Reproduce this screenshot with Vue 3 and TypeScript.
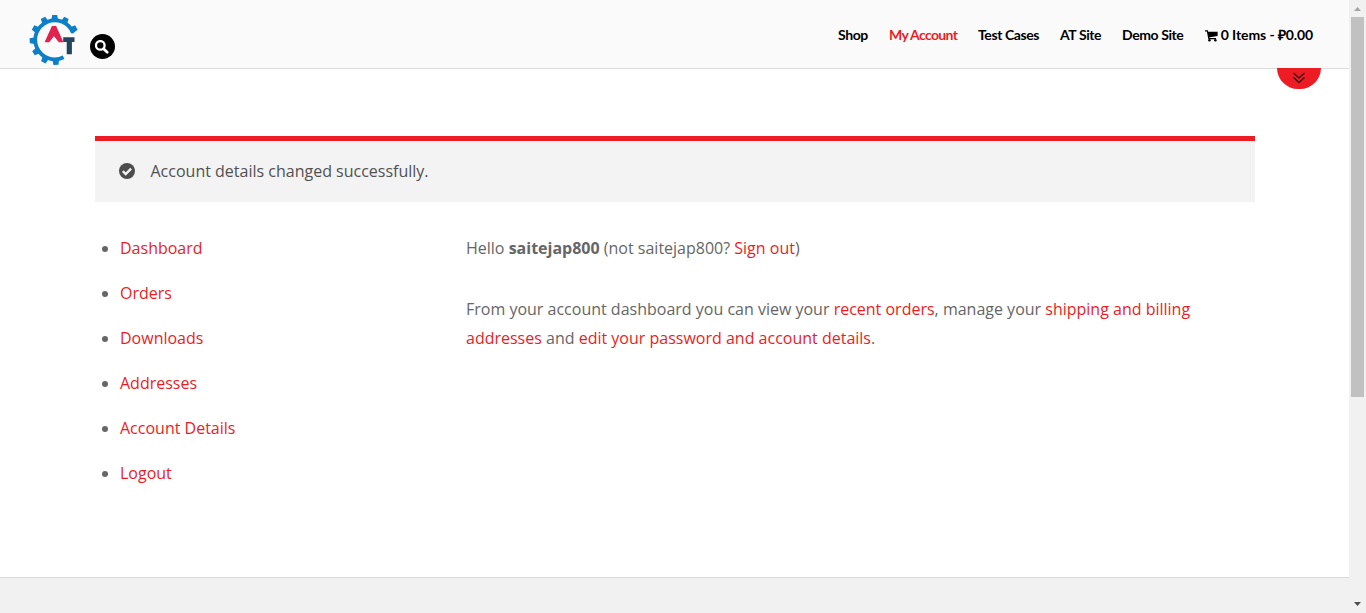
<script setup lang="ts">
interface NavItem {
  label: string
  active?: boolean
}

const navItems: NavItem[] = [
  { label: 'Shop' },
  { label: 'My Account', active: true },
  { label: 'Test Cases' },
  { label: 'AT Site' },
  { label: 'Demo Site' },
]

const accountLinks: string[] = ['Dashboard', 'Orders', 'Downloads', 'Addresses', 'Account Details', 'Logout']

const gearTeeth: number[] = [0, 28, 60, 177, 207, 238, 268, 300, 332]
</script>

<template>
  <div class="window">
    <div class="page">
      <header class="header">
        <svg class="logo" width="50" height="52" viewBox="0 0 50 52">
          <g fill="#0c7fc7">
            <path
              v-for="angle in gearTeeth"
              :key="angle"
              d="M22.2 7.5L23.2 1h5l1 6.5z"
              :transform="`rotate(${angle} 25.7 26)`"
            />
          </g>
          <path d="M43.9 18.7A19.5 19.5 0 1 0 34.6 43.2" fill="none" stroke="#0c7fc7" stroke-width="3.8" />
          <path d="M15.6 28.3L22.9 12h4.2L34.4 28.3h-4.6L25 22.3l-4.8 6z" fill="#e0234e" />
          <path d="M34.2 23.3h11.3v4.8h-2.6V40.3h-5.2V28.1h-3.5z" fill="#24455f" />
        </svg>
        <button class="search" aria-label="Search">
          <svg width="14" height="14" viewBox="0 0 14 14">
            <circle cx="5.3" cy="5.4" r="4.3" fill="none" stroke="#fff" stroke-width="2.3" />
            <path d="M8.6 8.7l3.6 3.6" stroke="#fff" stroke-width="2.7" stroke-linecap="round" />
          </svg>
        </button>
        <nav class="nav">
          <a v-for="item in navItems" :key="item.label" :class="{ active: item.active }">{{ item.label }}</a>
          <a class="cart">
            <svg width="13" height="12" viewBox="0 0 13 12">
              <path d="M0 .8h2.4l1.5 7.8h7.3" fill="none" stroke="#000" stroke-width="1.2" />
              <path d="M2.6 1.6h10.2v4.5L3.8 7.4z" />
              <circle cx="4.5" cy="10.3" r="1.3" />
              <circle cx="10.5" cy="10.3" r="1.3" />
            </svg>
            <span>0 Items - ₽0.00</span>
          </a>
        </nav>
        <button class="toggle" aria-label="Expand">
          <svg width="14" height="12" viewBox="0 0 14 12" fill="none" stroke="#25090a" stroke-width="1.1">
            <path d="M1.5 1l5.5 5 5.5-5M1.5 5.5l5.5 5 5.5-5" />
          </svg>
        </button>
      </header>

      <main class="content">
        <div class="message">
          <svg width="16" height="16" viewBox="0 0 16 16">
            <circle cx="8" cy="8" r="8" fill="#4d4d4d" />
            <path d="M3.8 8.2l2.9 2.9 5.4-5.5" fill="none" stroke="#f3f3f3" stroke-width="2.4" />
          </svg>
          <span>Account details changed successfully.</span>
        </div>
        <div class="columns">
          <ul class="menu">
            <li v-for="link in accountLinks" :key="link"><a>{{ link }}</a></li>
          </ul>
          <section class="details">
            <p>Hello <strong>saitejap800</strong> (not saitejap800? <a>Sign out</a>)</p>
            <p>
              From your account dashboard you can view your <a>recent orders</a>, manage your
              <a>shipping and billing addresses</a> and <a>edit your password and account details</a>.
            </p>
          </section>
        </div>
      </main>
      <footer class="footer"></footer>
    </div>

    <div class="scrollbar">
      <svg width="7" height="4" viewBox="0 0 7 4"><path d="M0 4L3.5 0 7 4z" fill="#a3a3a3" /></svg>
      <div class="thumb"></div>
      <svg class="down" width="7" height="4" viewBox="0 0 7 4"><path d="M0 0h7L3.5 4z" fill="#505050" /></svg>
    </div>
  </div>
</template>

<style>
body {
  overflow: hidden;
}
</style>

<style scoped>
.window {
  display: flex;
  width: 1366px;
  height: 613px;
  background: #fff;
  color: #666;
  font: 16px/29px "Open Sans", "Noto Sans", sans-serif;
}
.page {
  display: flex;
  flex-direction: column;
  width: 1349px;
}
.header {
  position: relative;
  box-sizing: border-box;
  display: flex;
  height: 69px;
  padding-left: 29px;
  background: #fafafa;
  border-bottom: 1px solid #ddd;
}
.logo {
  margin-top: 14px;
}
button {
  display: flex;
  align-items: center;
  justify-content: center;
  padding: 0;
  border: 0;
}
.search {
  width: 25px;
  height: 25px;
  margin: 34px 0 0 11px;
  border-radius: 50%;
  background: #000;
}
.search svg {
  margin-right: 1px;
}
.nav {
  display: grid;
  grid-template-columns: 30px 68px 61px 41px 62px 108px;
  gap: 21px;
  margin: 25px 36px 0 auto;
  color: #000;
  font-family: Lato, "Open Sans", sans-serif;
  font-size: 14px;
  font-weight: 700;
  letter-spacing: -0.4px;
  line-height: 20px;
  white-space: nowrap;
}
.nav .active {
  color: #ed1c24;
  letter-spacing: -0.65px;
}
.cart {
  display: flex;
  gap: 3px;
  letter-spacing: -0.1px;
}
.cart svg {
  margin-top: 5px;
}
.toggle {
  position: absolute;
  top: 68px;
  right: 28px;
  width: 44px;
  height: 21px;
  padding-bottom: 2px;
  border-radius: 0 0 22px 22px;
  background: #ed1c24;
}
.content {
  flex: 1;
  margin: 67px 94px 0 95px;
}
.message {
  box-sizing: border-box;
  display: flex;
  align-items: center;
  gap: 16px;
  height: 66px;
  padding: 0 0 1px 23.5px;
  border-top: 5px solid #ed1c24;
  background: #f3f3f3;
  color: #515151;
}
.columns {
  display: flex;
  margin-top: 32px;
}
.menu {
  box-sizing: border-box;
  width: 371px;
  margin: 0;
  padding-left: 25px;
}
.menu li {
  margin-bottom: 16px;
}
.content a {
  color: #ed1c24;
}
.details {
  width: 740px;
}
.details p {
  margin: 0 0 32px;
}
.footer {
  box-sizing: border-box;
  height: 36px;
  border-top: 1px solid #d9d9d9;
  background: #f1f1f1;
}
.scrollbar {
  box-sizing: border-box;
  display: flex;
  flex-direction: column;
  align-items: center;
  width: 17px;
  padding: 7px 0;
  background: #f1f1f1;
}
.thumb {
  width: 13px;
  height: 380px;
  margin: 6px 0 auto;
  background: #c1c1c1;
}
</style>
